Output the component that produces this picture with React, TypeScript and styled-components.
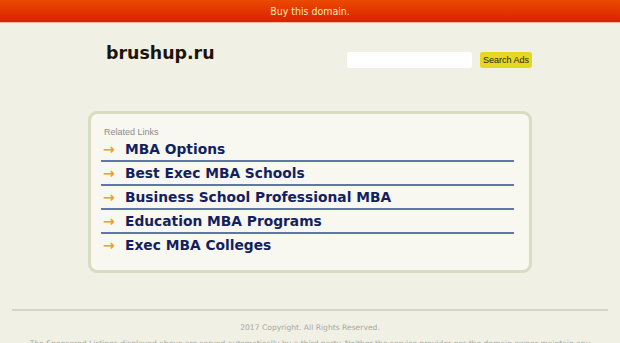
import React from "react";
import styled, { createGlobalStyle } from "styled-components";

const Global = createGlobalStyle`
  html, body { margin: 0; padding: 0; background: #f0f0e4; }
  body { font-family: "DejaVu Sans", Verdana, sans-serif; overflow: hidden; }
`;

const TopBar = styled.a`
  display: block;
  height: 22px;
  line-height: 22px;
  text-align: center;
  font-family: "DejaVu Sans Condensed", "DejaVu Sans", sans-serif;
  font-stretch: condensed;
  font-size: 10.5px;
  color: #ffe8b0;
  text-decoration: none;
  background: linear-gradient(#ea4a00, #dc2000);
  border-bottom: 1px solid #f4b89a;
`;

const Wrap = styled.div`
  width: 444px;
  margin: 0 auto;
`;

const Header = styled.div`
  display: flex;
  align-items: flex-start;
  justify-content: space-between;
  padding: 18px 0 0 18px;
  height: 72px;
  box-sizing: border-box;
`;

const Logo = styled.div`
  font-size: 17.4px;
  font-weight: bold;
  color: #1c1408;
  line-height: 24px;
`;

const SearchForm = styled.div`
  display: flex;
  gap: 8px;
  margin-top: 11px;
`;

const SearchInput = styled.div`
  width: 125px;
  height: 16px;
  background: #fff;
  border-radius: 3px;
`;

const SearchButton = styled.div`
  width: 52px;
  height: 16px;
  background: #e6d820;
  border-radius: 3px;
  font-family: "Liberation Sans", Arial, sans-serif;
  font-size: 9px;
  line-height: 16px;
  text-align: center;
  color: #24240c;
`;

const Box = styled.div`
  margin-top: 16px;
  height: 162px;
  box-sizing: border-box;
  border: 3px solid #d6ddc0;
  border-radius: 9px;
  background: #f8f7f0;
  padding: 12px 15px 0 10px;
`;

const Title = styled.div`
  font-family: "Liberation Sans", Arial, sans-serif;
  font-size: 9px;
  color: #8c8c8c;
  padding-left: 3px;
  line-height: 12px;
`;

const List = styled.div`
  display: flex;
  flex-direction: column;
`;

const Row = styled.div<{ $last?: boolean }>`
  display: flex;
  align-items: center;
  height: 22px;
  border-bottom: 2px solid ${(p) => (p.$last ? "transparent" : "#6076ab")};
`;

const Arrow = styled.span`
  width: 24px;
  padding-left: 2px;
  box-sizing: border-box;
  color: #f0a010;
  font-size: 14px;
  font-weight: bold;
`;

const LinkText = styled.a`
  font-size: 13.8px;
  font-weight: bold;
  color: #131f5e;
  text-decoration: none;
`;

const Footer = styled.div`
  margin: 36px 12px 0;
  border-top: 2px solid #d4d4cc;
  text-align: center;
  font-size: 7.6px;
  color: #a8a8a0;
`;

const Copy = styled.div`
  padding-top: 11px;
  line-height: 12px;
`;

const Disclaimer = styled.div`
  width: 570px;
  margin: 4px auto 0;
  line-height: 12px;
`;

const links = [
  "MBA Options",
  "Best Exec MBA Schools",
  "Business School Professional MBA",
  "Education MBA Programs",
  "Exec MBA Colleges",
];

export default function App() {
  return (
    <>
      <Global />
      <TopBar href="#">Buy this domain.</TopBar>
      <Wrap>
        <Header>
          <Logo>brushup.ru</Logo>
          <SearchForm>
            <SearchInput />
            <SearchButton>Search Ads</SearchButton>
          </SearchForm>
        </Header>
        <Box>
          <Title>Related Links</Title>
          <List>
            {links.map((l, i) => (
              <Row key={l} $last={i === links.length - 1}>
                <Arrow>→</Arrow>
                <LinkText href="#">{l}</LinkText>
              </Row>
            ))}
          </List>
        </Box>
      </Wrap>
      <Footer>
        <Copy>2017 Copyright. All Rights Reserved.</Copy>
        <Disclaimer>
          The Sponsored Listings displayed above are served automatically by a third party. Neither the service provider nor the domain owner maintain any relationship with the advertisers.
        </Disclaimer>
      </Footer>
    </>
  );
}
